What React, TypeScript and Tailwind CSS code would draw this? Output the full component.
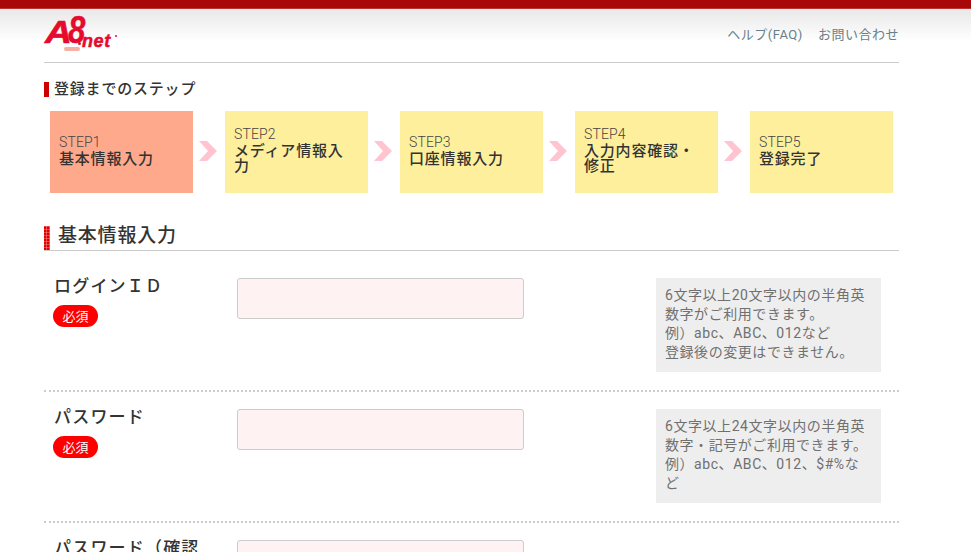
const font = "[font-family:Roboto,'Noto_Sans_CJK_JP',sans-serif]";

const steps = [
  { n: "STEP1", t: "基本情報入力", active: true },
  { n: "STEP2", t: "メディア情報入力" },
  { n: "STEP3", t: "口座情報入力" },
  { n: "STEP4", t: "入力内容確認・修正" },
  { n: "STEP5", t: "登録完了" },
];

function Chevron() {
  return (
    <svg width="32" height="82" viewBox="0 0 32 82" className="shrink-0">
      <polygon points="6,30 14,30 24,40 14,50 6,50 15,40" fill="#ffc4cf" />
    </svg>
  );
}

function Field({ label, note }: { label: string; note?: string[] }) {
  return (
    <div className="flex items-start border-b-2 border-dotted border-[#ccc] pt-[17px] pb-[18px] pl-[9px]">
      <div className="w-[184px] shrink-0">
        <div className="h-[17px] pl-[1px] text-[17px] leading-[17px] font-medium tracking-[0.07em] whitespace-nowrap text-[#333]">{label}</div>
        <span className="mt-[10px] flex h-[22px] w-[45px] items-center justify-center rounded-full bg-[#f00] text-[13px] leading-none tracking-normal text-white">
          必須
        </span>
      </div>
      <input
        type="text"
        className="h-[41px] w-[287px] shrink-0 rounded-[3px] border border-[#ccc] bg-[#fef2f2]"
      />
      {note && (
        <div className="ml-[132px] w-[225px] shrink-0 bg-[#eee] px-[9px] pt-[8px] pb-[10px] text-[14px] leading-[19px] tracking-[0.04em] whitespace-nowrap text-[#707070]">
          {note.map((l) => (
            <div key={l}>{l}</div>
          ))}
        </div>
      )}
    </div>
  );
}

export default function App() {
  return (
    <div className={`${font} h-[552px] overflow-hidden bg-white tracking-[0.05em]`}>
      <div className="h-[9px] border-b border-[#bb3333] bg-[#a80808]" />
      <div className="h-[32px] bg-gradient-to-b from-[#e8e8e8] to-white" />
      <div className="-mt-[32px] ml-[44px] w-[855px]">
        <header className="flex h-[54px] items-start justify-between border-b border-[#ccc]">
          <div className="relative mt-[9px] ml-[1px] h-[40px] w-[75px] font-bold text-[#e60b2c] italic tracking-normal [font-family:'Liberation_Sans',sans-serif]">
            <span className="absolute -top-[3px] left-0 origin-left scale-x-[1.2] text-[31px] leading-[36px] [-webkit-text-stroke:0.6px_#e60b2c]">A</span>
            <span className="absolute -top-[8px] left-[23px] origin-left scale-x-[0.8] text-[39px] leading-[40px] [-webkit-text-stroke:0.4px_#e60b2c]">8</span>
            <span className="absolute top-[14px] left-[37px] text-[18px] leading-[18px] tracking-[0.6px] [-webkit-text-stroke:0.5px_#e60b2c]">net</span>
            <span className="absolute top-[24px] left-[33px] h-[3px] w-[3px] rounded-full bg-[#e60b2c]" />
            <span className="absolute top-[17px] left-[70px] h-[2px] w-[2px] rounded-full bg-[#e60b2c]" />
            <span className="absolute top-[29px] left-[19px] h-[4px] w-[16px] rounded-full bg-[#f4b0a0]" />
          </div>
          <nav className="mt-[17px] flex gap-[15px] text-[13px] leading-[18px] tracking-[0.04em] text-[#68808a]">
            <span>ヘルプ(FAQ)</span>
            <span>お問い合わせ</span>
          </nav>
        </header>

        <h2 className="mt-[19px] border-l-[5px] border-[#cc0000] pl-[5px] text-[15px] leading-[15px] font-medium text-[#333]">
          登録までのステップ
        </h2>

        <div className="mt-[14px] ml-[6px] flex">
          {steps.map((s, i) => (
            <div key={s.n} className="flex">
              <div
                className={`flex h-[82px] w-[143px] flex-col justify-center px-[9px] pb-[4px] ${
                  s.active ? "bg-[#ffa98c]" : "bg-[#feef9c]"
                }`}
              >
                <div className="text-[14px] leading-[16px] font-light tracking-[0.01em] text-[#444]">{s.n}</div>
                <div className="mt-[2px] text-[15px] leading-[15px] font-medium text-[#333]">{s.t}</div>
              </div>
              {i < steps.length - 1 && <Chevron />}
            </div>
          ))}
        </div>

        <h1 className="mt-[33px] flex h-[25px] items-center border-b border-[#ccc] text-[19px] font-medium text-[#333]">
          <span className="mr-[8px] h-[24px] w-[6px] self-start bg-[repeating-linear-gradient(90deg,transparent_0,transparent_2px,rgba(255,130,130,0.6)_2px,rgba(255,130,130,0.6)_3px),repeating-linear-gradient(0deg,#d90000_0,#d90000_2px,#f04040_2px,#f04040_3px)]" />
          <span className="-mt-[3px]">基本情報入力</span>
        </h1>

        <div className="mt-[10px]">
          <Field
            label="ログインＩＤ"
            note={[
              "6文字以上20文字以内の半角英",
              "数字がご利用できます。",
              "例）abc、ABC、012など",
              "登録後の変更はできません。",
            ]}
          />
          <Field
            label="パスワード"
            note={[
              "6文字以上24文字以内の半角英",
              "数字・記号がご利用できます。",
              "例）abc、ABC、012、$#%な",
              "ど",
            ]}
          />
          <Field label="パスワード（確認" />
        </div>
      </div>
    </div>
  );
}
